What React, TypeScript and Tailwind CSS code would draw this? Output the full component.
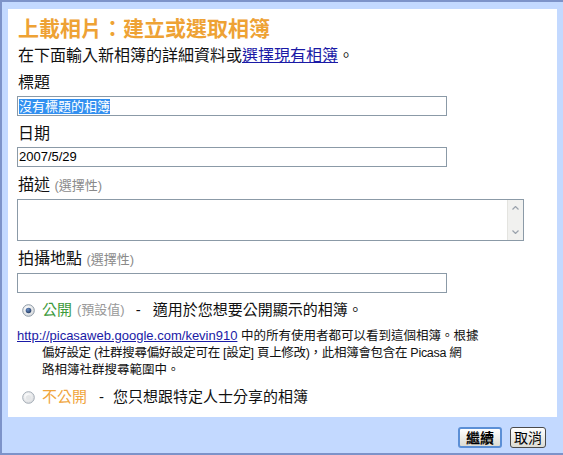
import React from "react";

const cjk = { fontFamily: '"Liberation Sans", "Noto Sans CJK TC", sans-serif' };

function RadioOn() {
  return (
    <svg width="13" height="13" viewBox="0 0 13 13" className="shrink-0">
      <defs>
        <radialGradient id="rg1" cx="40%" cy="35%" r="70%">
          <stop offset="0%" stopColor="#ffffff" />
          <stop offset="100%" stopColor="#d6d9dc" />
        </radialGradient>
        <radialGradient id="dot1" cx="40%" cy="35%" r="70%">
          <stop offset="0%" stopColor="#6a8fc8" />
          <stop offset="100%" stopColor="#23395e" />
        </radialGradient>
      </defs>
      <circle cx="6.5" cy="6.5" r="5.8" fill="url(#rg1)" stroke="#8d9aa6" strokeWidth="1" />
      <circle cx="6.5" cy="6.5" r="2.8" fill="url(#dot1)" />
    </svg>
  );
}

function RadioOff() {
  return (
    <svg width="13" height="13" viewBox="0 0 13 13" className="shrink-0">
      <defs>
        <radialGradient id="rg2" cx="40%" cy="35%" r="70%">
          <stop offset="0%" stopColor="#ffffff" />
          <stop offset="100%" stopColor="#d9dbde" />
        </radialGradient>
      </defs>
      <circle cx="6.5" cy="6.5" r="5.8" fill="url(#rg2)" stroke="#a3acb5" strokeWidth="1" />
      <circle cx="6.5" cy="6.5" r="2.6" fill="#e4e6e8" />
    </svg>
  );
}

export default function App() {
  return (
    <div
      className="w-[563px] h-[455px] bg-[#c3d9ff] border-t-2 border-l-2 border-b-2 border-[#7d93c9] flex flex-col overflow-hidden"
      style={cjk}
    >
      <div className="ml-[6px] mr-[6px] mt-[7px] h-[408px] bg-white pl-[9px] pt-[8px] text-[#111]">
        <div className="text-[21px] leading-[24px] font-bold text-[#eea234] pl-[1px] whitespace-nowrap">
          上載相片：建立或選取相簿
        </div>
        <div className="mt-[5px] text-[16px] leading-[20px] pl-[1px] whitespace-nowrap">
          在下面輸入新相簿的詳細資料或
          <span className="text-[#1a1aa6] underline">選擇現有相簿</span>。
        </div>
        <div className="mt-[7px] text-[16px] leading-[20px] pl-[1px]">標題</div>
        <div className="mt-[3px] w-[430px] h-[20px] border border-[#8b9aa7] flex items-center px-[1px]">
          <span className="bg-[#3390f0] text-white text-[13px] leading-[15px]">沒有標題的相簿</span>
        </div>
        <div className="mt-[8px] text-[16px] leading-[20px] pl-[1px]">日期</div>
        <div className="mt-[3px] w-[430px] h-[20px] border border-[#8b9aa7] flex items-center px-[1px] text-[13px] text-black">
          2007/5/29
        </div>
        <div className="mt-[8px] text-[16px] leading-[20px] pl-[1px]">
          描述 <span className="text-[13px] text-[#8a8a8a]">(選擇性)</span>
        </div>
        <div className="mt-[3px] w-[507px] h-[42px] border border-[#8b9aa7] flex justify-end">
          <div className="w-[16px] h-full bg-[#f1f1ef] border-l border-[#e4e4e0] flex flex-col justify-between items-center py-[6px]">
            <svg width="7" height="4" viewBox="0 0 7 4">
              <path d="M0.5 3.5 L3.5 0.5 L6.5 3.5" fill="none" stroke="#9aa2ac" strokeWidth="1.2" />
            </svg>
            <svg width="7" height="4" viewBox="0 0 7 4">
              <path d="M0.5 0.5 L3.5 3.5 L6.5 0.5" fill="none" stroke="#9aa2ac" strokeWidth="1.2" />
            </svg>
          </div>
        </div>
        <div className="mt-[8px] text-[16px] leading-[20px] pl-[1px]">
          拍攝地點 <span className="text-[13px] text-[#8a8a8a]">(選擇性)</span>
        </div>
        <div className="mt-[3px] w-[430px] h-[20px] border border-[#8b9aa7]" />

        <div className="mt-[7px] h-[20px] flex items-center pl-[5px] text-[15px] whitespace-nowrap">
          <RadioOn />
          <span className="ml-[7px] text-[#3d9a3d]">公開</span>
          <span className="ml-[5px] text-[13px] text-[#999]">(預設值)</span>
          <span className="ml-[11px]">-</span>
          <span className="ml-[12px]">適用於您想要公開顯示的相簿。</span>
        </div>
        <div className="mt-[7px] text-[12.5px] leading-[17px] whitespace-nowrap">
          <div>
            <span className="text-[13px] text-[#1a1aa6] underline" style={{ fontFamily: '"Liberation Sans", sans-serif' }}>
              http://picasaweb.google.com/kevin910
            </span>{" "}
            中的所有使用者都可以看到這個相簿。根據
          </div>
          <div className="pl-[25px] tracking-[-0.3px]">
            偏好設定 (社群搜尋偏好設定可在 [設定] 頁上修改)，此相簿會包含在 Picasa 網
          </div>
          <div className="pl-[25px]">路相簿社群搜尋範圍中。</div>
        </div>
        <div className="mt-[8px] h-[20px] flex items-center pl-[5px] text-[15px] whitespace-nowrap">
          <RadioOff />
          <span className="ml-[7px] text-[#f0a53c]">不公開</span>
          <span className="ml-[12px]">-</span>
          <span className="ml-[9px]">您只想跟特定人士分享的相簿</span>
        </div>
      </div>
      <div className="flex justify-end gap-[8px] pt-[10px] pr-[17px]">
        <button className="w-[44px] h-[21px] rounded-[3px] border-2 border-[#5b8fd6] bg-gradient-to-b from-[#ffffff] to-[#dcdcd4] text-[14px] font-bold text-black leading-none flex items-center justify-center">
          繼續
        </button>
        <button className="w-[36px] h-[21px] rounded-[3px] border border-[#4a4a4a] bg-gradient-to-b from-[#ffffff] to-[#dcdcd4] text-[14px] text-black leading-none flex items-center justify-center">
          取消
        </button>
      </div>
    </div>
  );
}
